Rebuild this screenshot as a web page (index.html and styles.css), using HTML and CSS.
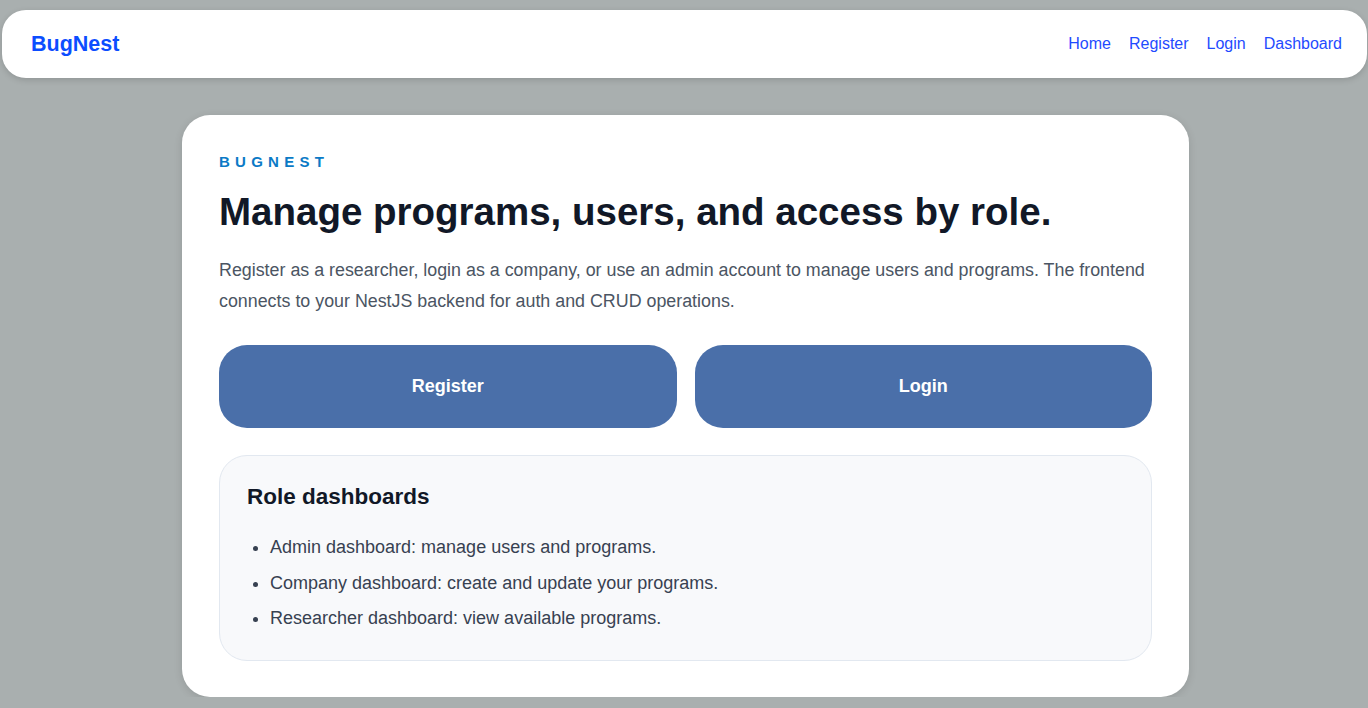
FILE: index.html
```html
<!DOCTYPE html>
<html lang="en">

<head>
    <meta charset="UTF-8">
    <title>BugNest</title>
    <link rel="stylesheet" href="styles.css">
</head>

<body>
    <header class="navbar">
        <a class="brand" href="#">BugNest</a>
        <nav class="nav-links">
            <a href="#">Home</a>
            <a href="#">Register</a>
            <a href="#">Login</a>
            <a href="#">Dashboard</a>
        </nav>
    </header>

    <main class="card">
        <p class="eyebrow">BugNest</p>
        <h1>Manage programs, users, and access by role.</h1>
        <p class="lead">Register as a researcher, login as a company, or use an admin account to manage users and programs. The frontend connects to your NestJS backend for auth and CRUD operations.</p>

        <div class="actions">
            <a class="btn" href="#">Register</a>
            <a class="btn" href="#">Login</a>
        </div>

        <section class="roles">
            <h2>Role dashboards</h2>
            <ul>
                <li>Admin dashboard: manage users and programs.</li>
                <li>Company dashboard: create and update your programs.</li>
                <li>Researcher dashboard: view available programs.</li>
            </ul>
        </section>
    </main>
</body>

</html>
```

FILE: styles.css
```css
body {
    margin: 0;
    background: #a9afaf;
    font-family: "Liberation Sans", Arial, sans-serif;
    color: #111827;
}

a {
    text-decoration: none;
}

.navbar {
    margin: 10px 1px 0 2px;
    height: 68px;
    background: #fff;
    border-radius: 24px;
    box-shadow: 0 2px 6px rgba(0, 0, 0, 0.15);
    display: flex;
    align-items: center;
    justify-content: space-between;
    padding: 0 25px 0 29px;
    box-sizing: border-box;
}

.brand {
    color: #0b4dff;
    font-weight: bold;
    font-size: 21.5px;
}

.nav-links {
    display: flex;
    gap: 18px;
}

.nav-links a {
    color: #1f4bff;
    font-size: 16px;
}

.card {
    width: 1007px;
    box-sizing: border-box;
    margin: 37px auto 0 182px;
    background: #fff;
    border-radius: 28px;
    padding: 38px 37px 36px;
    box-shadow: 0 2px 8px rgba(0, 0, 0, 0.12);
}

.eyebrow {
    margin: 0;
    color: #0b7ac6;
    font-size: 15px;
    font-weight: bold;
    text-transform: uppercase;
    letter-spacing: 0.35em;
}

h1 {
    margin: 18px 0 0;
    font-size: 38.5px;
    line-height: 48px;
    color: #111827;
}

.lead {
    margin: 19px 0 0;
    font-size: 17.85px;
    line-height: 31px;
    color: #4b5563;
}

.actions {
    display: grid;
    grid-template-columns: 1fr 1fr;
    gap: 18px;
    margin-top: 28px;
}

.btn {
    display: flex;
    align-items: center;
    justify-content: center;
    height: 83px;
    border-radius: 28px;
    background: #4a6fa9;
    color: #fff;
    font-weight: bold;
    font-size: 18px;
}

.roles {
    margin-top: 27px;
    background: #f8f9fb;
    border: 1px solid #e2e8f0;
    border-radius: 28px;
    padding: 28px 27px 18px;
}

.roles h2 {
    margin: 0;
    font-size: 22.5px;
    color: #111827;
}

.roles ul {
    margin: 25px 0 0;
    padding-left: 23px;
}

.roles li {
    font-size: 18px;
    line-height: 24px;
    color: #374151;
    margin-bottom: 11.5px;
}
```
